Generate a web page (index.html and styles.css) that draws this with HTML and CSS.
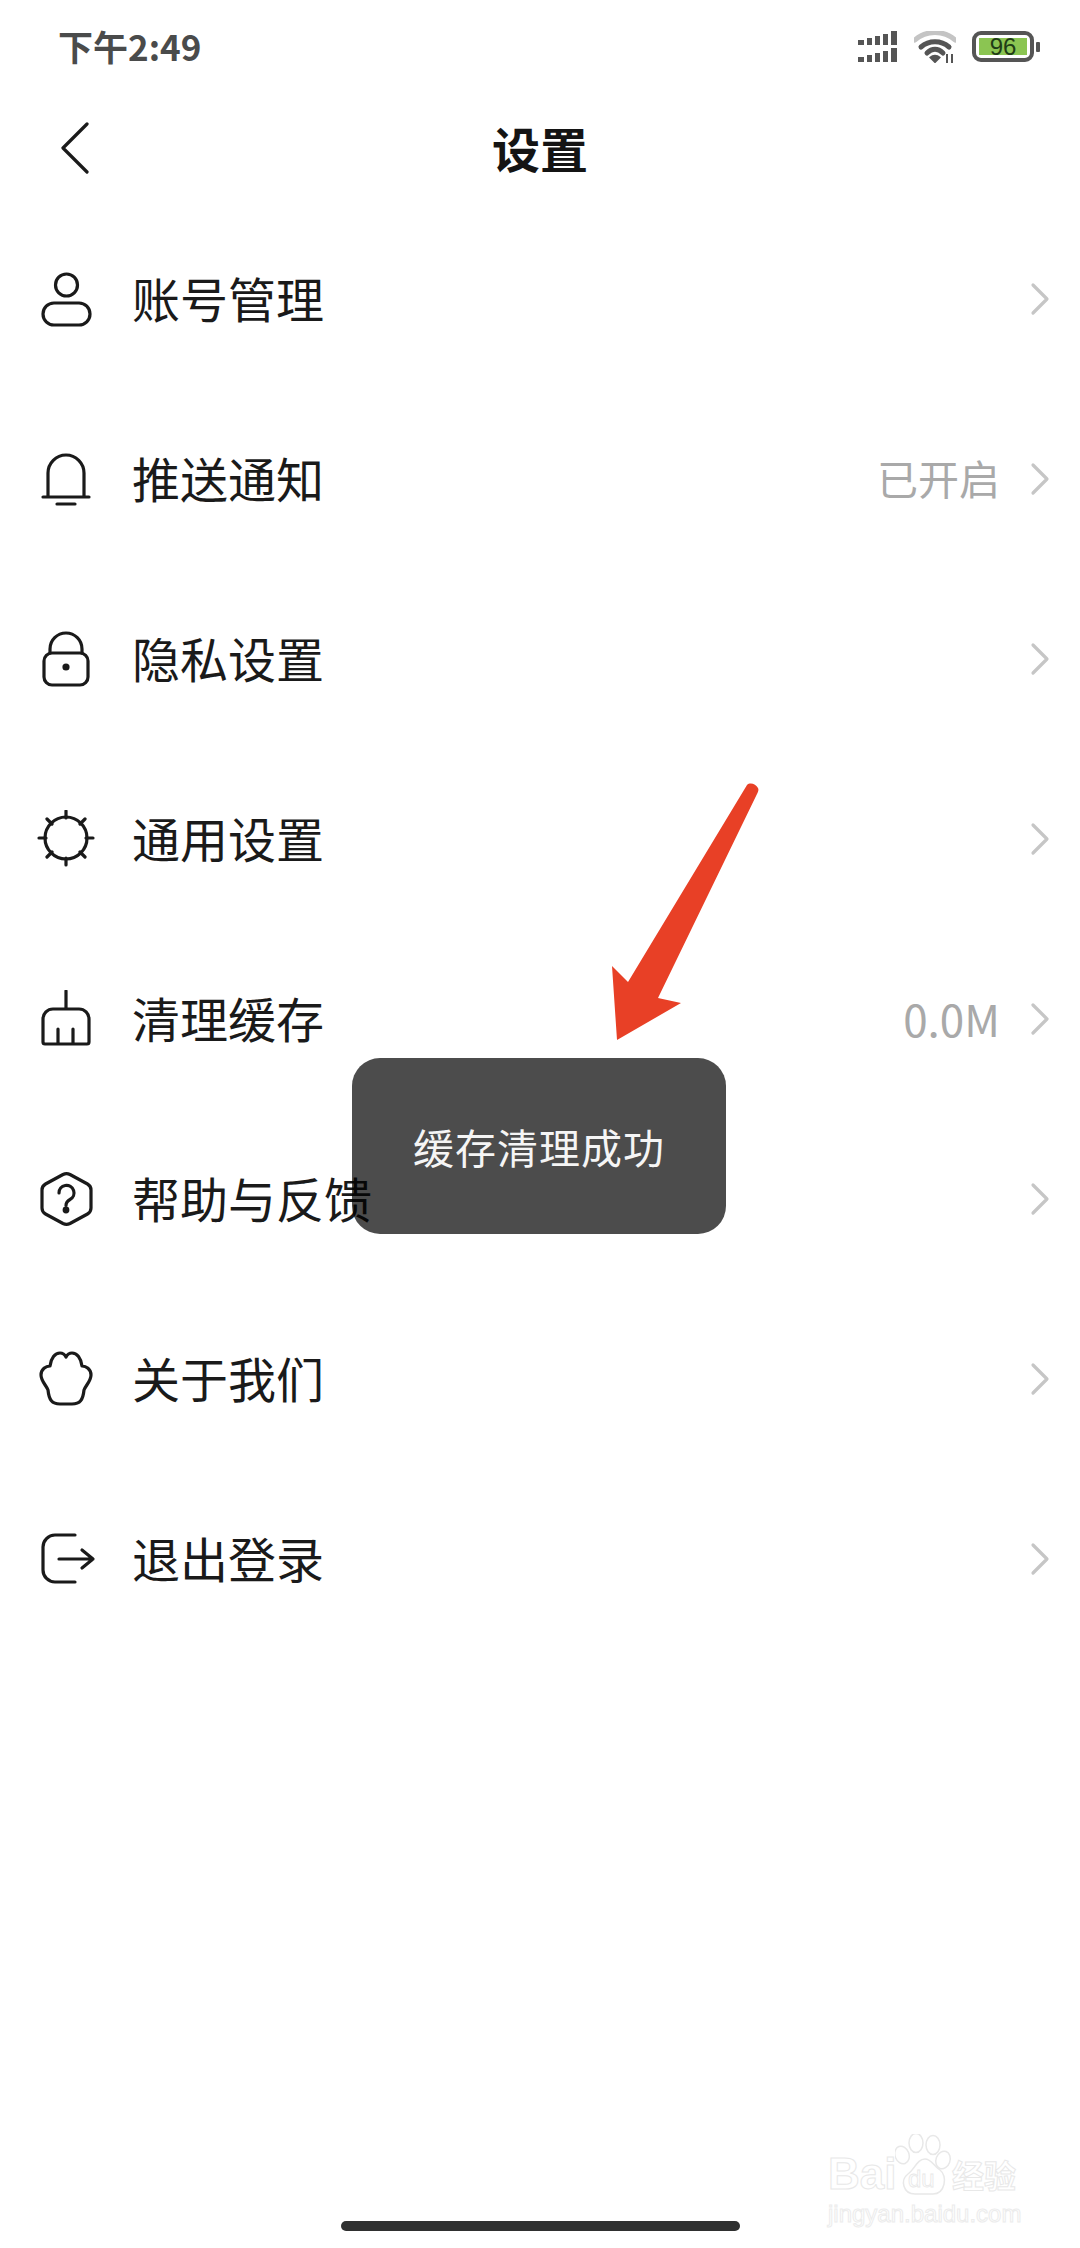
FILE: index.html
```html
<!DOCTYPE html>
<html lang="zh-CN">
<head>
<meta charset="utf-8">
<title>设置</title>
<link rel="stylesheet" href="styles.css">
</head>
<body>
<div class="page">
  <div class="status">
    <span class="time">下午2:49</span>
    <div class="status-icons">
      <svg class="signal" viewBox="0 0 40 32" width="40" height="32">
        <path d="M0 9h6v5H0zM9 7h5v7H9zM17 5h5v9h-5zM25 3h5v11h-5zM33 0h6v14h-6zM0 26h6v5H0zM9 24h5v7H9zM17 22h5v9h-5zM25 20h5v11h-5zM33 17h6v14h-6z"/>
      </svg>
      <svg class="wifi" viewBox="0 0 42 32" width="42" height="32">
        <path class="wifi-outer" d="M1 9C12-1 30-1 41 9"/>
        <path class="wifi-mid" d="M7 16C15 9 27 9 35 16"/>
        <path class="wifi-mid" d="M13 22C18 17 24 17 29 22"/>
        <path class="wifi-dot" d="M16.500 26.500C19 24 23 24 25.500 26.500L21 31Z"/>
        <path class="wifi-dot" d="M33 23v9M38 23v9" />
      </svg>
      <div class="battery">
        <div class="battery-body"><div class="battery-fill">96</div></div>
        <div class="battery-nub"></div>
      </div>
    </div>
  </div>

  <header class="nav">
    <svg class="back" viewBox="0 0 30 52" width="30" height="52"><path d="M27 2 3 26l24 24"/></svg>
    <h1 class="title">设置</h1>
  </header>

  <ul class="list">
    <li class="row">
      <svg class="ic" viewBox="0 0 60 60"><circle cx="30.500" cy="15" r="11"/><rect x="7" y="33" width="47" height="22" rx="11"/></svg>
      <span class="label">账号管理</span>
      <svg class="chev" viewBox="0 0 20 36"><path d="M3 4l14 14L3 32"/></svg>
    </li>
    <li class="row">
      <svg class="ic" viewBox="0 0 60 60"><path d="M12 47V23a18 18 0 0 1 36 0v24M7 47h46M21 54h18"/></svg>
      <span class="label">推送通知</span>
      <span class="value">已开启</span>
      <svg class="chev" viewBox="0 0 20 36"><path d="M3 4l14 14L3 32"/></svg>
    </li>
    <li class="row">
      <svg class="ic" viewBox="0 0 60 60"><path d="M14 23v-4a16 16 0 0 1 32 0v4"/><rect x="8" y="23" width="44" height="32" rx="8"/><circle class="solid" cx="30" cy="37" r="2"/></svg>
      <span class="label">隐私设置</span>
      <svg class="chev" viewBox="0 0 20 36"><path d="M3 4l14 14L3 32"/></svg>
    </li>
    <li class="row">
      <svg class="ic" viewBox="0 0 60 60"><circle cx="30" cy="28" r="21"/><path d="M30 1v7M30 48v7M3 28h7M50 28h7M11 9l5 5M44 42l5 5M49 9l-5 5M16 42l-5 5"/></svg>
      <span class="label">通用设置</span>
      <svg class="chev" viewBox="0 0 20 36"><path d="M3 4l14 14L3 32"/></svg>
    </li>
    <li class="row">
      <svg class="ic" viewBox="0 0 60 60"><path d="M30 1v18M7 52V29a10 10 0 0 1 10-10h26a10 10 0 0 1 10 10v23a2 2 0 0 1-2 2H9a2 2 0 0 1-2-2zM22 39v15M37 39v15"/></svg>
      <span class="label">清理缓存</span>
      <span class="value value-num">0.0M</span>
      <svg class="chev" viewBox="0 0 20 36"><path d="M3 4l14 14L3 32"/></svg>
    </li>
    <li class="row">
      <svg class="ic" viewBox="0 0 60 60"><path d="M27 4.500q3.500-1.800 7 0l17.500 9.500q3.500 2 3.500 6v18q0 4-3.500 6L34 53.500q-3.500 1.800-7 0L9.500 44Q6 42 6 38V20q0-4 3.500-6z"/><path d="M23 23a7.500 7.500 0 1 1 11 6.500c-3 1.600-4 3-4 6"/><circle class="solid" cx="30" cy="40" r="1.800"/></svg>
      <span class="label">帮助与反馈</span>
      <svg class="chev" viewBox="0 0 20 36"><path d="M3 4l14 14L3 32"/></svg>
    </li>
    <li class="row">
      <svg class="ic" viewBox="0 0 60 60"><path d="M12 40C10 35 5 31 5 25 5 19 10 16 14 16 15 8 19 3 24 3c3 0 5 2 6 4 1-2 3-4 6-4 5 0 9 5 10 13 4 0 9 3 9 9 0 6-5 10-7 15-1 10-4 14-12 14H24c-8 0-11-4-12-14z"/></svg>
      <span class="label">关于我们</span>
      <svg class="chev" viewBox="0 0 20 36"><path d="M3 4l14 14L3 32"/></svg>
    </li>
    <li class="row">
      <svg class="ic" viewBox="0 0 60 60"><path d="M39 5H19A12 12 0 0 0 7 17v23a12 12 0 0 0 12 12h20M23 29h34M46 20l11 9-11 9"/></svg>
      <span class="label">退出登录</span>
      <svg class="chev" viewBox="0 0 20 36"><path d="M3 4l14 14L3 32"/></svg>
    </li>
  </ul>

  <div class="home-bar"></div>

  <svg class="arrow" viewBox="0 0 160 270" width="160" height="270">
    <path d="M147 5C150 2 156 4 158 8 159 10 158 12 157 14L58 218 81 223 17 260 12 186 28 202Z"/>
  </svg>

  <div class="toast">缓存清理成功</div>

  <div class="watermark">
    <div class="wm-top">
      <span class="wm-bai">Bai</span>
      <span class="wm-paw">
        <svg viewBox="0 0 57 62" width="57" height="62">
          <ellipse cx="7" cy="21" rx="7" ry="9" transform="rotate(-20 7 21)"/>
          <ellipse cx="21" cy="9" rx="7" ry="9.500"/>
          <ellipse cx="38" cy="11" rx="7" ry="9.500"/>
          <ellipse cx="48" cy="26" rx="7" ry="9" transform="rotate(20 48 26)"/>
          <path d="M30 25C36 25 39 32 45 36 53 42 50 60 38 60H20C8 60 5 46 13 40 20 35 22 25 30 25Z"/>
        </svg>
        <span class="wm-du">du</span>
      </span>
      <span class="wm-cn">经验</span>
    </div>
    <div class="wm-url">jingyan.baidu.com</div>
  </div>
</div>
</body>
</html>
```

FILE: styles.css
```css
* { box-sizing: border-box; margin: 0; padding: 0; }
html, body { width: 1080px; height: 2248px; background: #fff; overflow: hidden; }
body { font-family: "Noto Sans CJK SC", "Noto Sans", sans-serif; color: #1a1a1a; }

.page { position: relative; width: 1080px; height: 2248px; display: flex; flex-direction: column; background: #fff; }

.status { height: 90px; flex: none; display: flex; align-items: center; padding: 3px 40px 0 58px; justify-content: space-between; }
.time { font-size: 35px; font-weight: 700; color: #4a4b4b; line-height: 1; margin-bottom: 3px; }
.status-icons { display: flex; align-items: center; }
.signal { fill: #555; margin-right: 16px; }
.wifi { fill: none; margin-right: 16px; }
.wifi-outer { stroke: #c4c4c4; stroke-width: 5; stroke-linecap: round; }
.wifi-mid { stroke: #555; stroke-width: 5; stroke-linecap: round; }
.wifi-dot { fill: #555; stroke: #555; stroke-width: 2; }
.battery { display: flex; align-items: center; }
.battery-body { width: 62px; height: 31px; border: 4px solid #555; border-radius: 9px; padding: 3px 3px; }
.battery-fill { height: 100%; background: #8bc552; color: #1f3d16; font-family: "Liberation Sans", sans-serif; font-size: 24px; line-height: 17px; text-align: center; }
.battery-nub { width: 4px; height: 10px; margin-left: 2px; background: #555; border-radius: 1px; }

.nav { height: 120px; flex: none; position: relative; display: flex; align-items: center; justify-content: center; }
.back { position: absolute; left: 60px; top: 32px; fill: none; stroke: #1a1a1a; stroke-width: 3.200; stroke-linecap: round; stroke-linejoin: round; }
.title { font-size: 48px; font-weight: 700; line-height: 1; color: #141414; margin-bottom: 6px; }

.list { list-style: none; flex: 1; }
.row { height: 180px; display: flex; align-items: center; padding: 0 30px 0 36px; }
.ic { width: 60px; height: 60px; flex: none; fill: none; stroke: #1a1a1a; stroke-width: 3.200; stroke-linecap: round; stroke-linejoin: round; }
.ic .solid { fill: #1a1a1a; }
.label { margin-left: 36px; margin-bottom: 6px; font-size: 48px; line-height: 1; color: #1a1a1a; }
.value { margin-left: auto; margin-bottom: 6px; font-size: 41px; line-height: 1; color: #a9a9a9; }
.value-num { font-size: 44px; margin-bottom: 4px; }
.chev { width: 20px; height: 36px; margin-left: 30px; margin-bottom: 2px; flex: none; fill: none; stroke: #c6c6c6; stroke-width: 3.200; stroke-linecap: round; stroke-linejoin: round; }
.row > .label + .chev { margin-left: auto; }

.home-bar { flex: none; width: 399px; height: 10px; margin: 0 auto 17px; background: #2f3030; border-radius: 5px; }

.arrow { position: absolute; left: 600px; top: 780px; fill: #e84026; }

.toast { position: absolute; left: 352px; top: 1058px; width: 374px; height: 176px; display: flex; align-items: center; justify-content: center; background: rgba(0, 0, 0, 0.7); border-radius: 28px; color: #f5f5f5; font-size: 41px; line-height: 1; letter-spacing: 1px; }

.watermark { position: absolute; left: 828px; top: 2132px; width: 220px; color: #fff; }
.wm-top { display: flex; align-items: flex-end; height: 64px; }
.wm-bai { width: 67px; flex: none; font-family: "Liberation Sans", sans-serif; font-weight: 700; font-size: 44px; line-height: 44px; color: #fff; -webkit-text-stroke: 1px #e8e8e8; }
.wm-paw { position: relative; width: 57px; height: 62px; flex: none; }
.wm-paw svg { fill: #fff; stroke: #e8e8e8; stroke-width: 1.500; }
.wm-du { position: absolute; left: 13px; top: 33px; font-family: "Liberation Sans", sans-serif; font-size: 24px; line-height: 1; color: #fff; -webkit-text-stroke: 0.800px #e8e8e8; }
.wm-cn { font-size: 32px; line-height: 44px; font-weight: 700; color: #fff; -webkit-text-stroke: 1px #e8e8e8; }
.wm-url { font-family: "Liberation Sans", sans-serif; font-size: 24px; line-height: 28px; margin-top: 4px; color: #fff; -webkit-text-stroke: 1px #ececec; white-space: nowrap; }
```
